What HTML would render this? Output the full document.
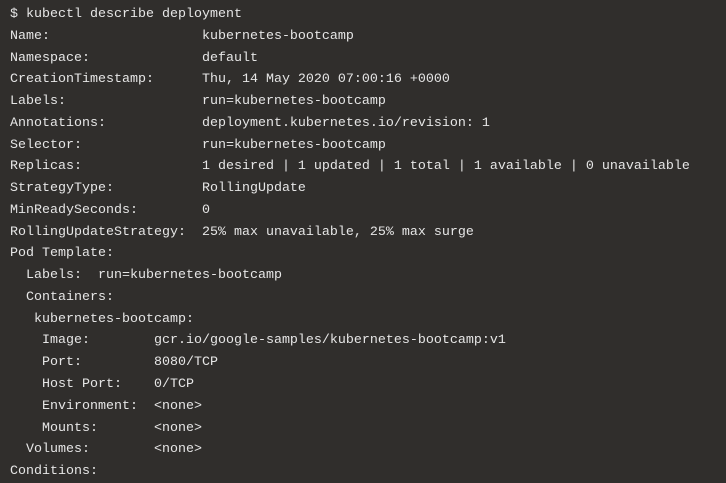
<!DOCTYPE html>
<html><head><style>
html,body{margin:0;padding:0;background:#302e2c;width:726px;height:483px;overflow:hidden}
pre{margin:0;position:absolute;left:10px;top:4px;font-family:"Liberation Mono",monospace;font-size:13.33px;line-height:21.76px;color:#e6e6e6}
</style></head><body>
<pre>$ kubectl describe deployment
Name:                   kubernetes-bootcamp
Namespace:              default
CreationTimestamp:      Thu, 14 May 2020 07:00:16 +0000
Labels:                 run=kubernetes-bootcamp
Annotations:            deployment.kubernetes.io/revision: 1
Selector:               run=kubernetes-bootcamp
Replicas:               1 desired | 1 updated | 1 total | 1 available | 0 unavailable
StrategyType:           RollingUpdate
MinReadySeconds:        0
RollingUpdateStrategy:  25% max unavailable, 25% max surge
Pod Template:
  Labels:  run=kubernetes-bootcamp
  Containers:
   kubernetes-bootcamp:
    Image:        gcr.io/google-samples/kubernetes-bootcamp:v1
    Port:         8080/TCP
    Host Port:    0/TCP
    Environment:  &lt;none&gt;
    Mounts:       &lt;none&gt;
  Volumes:        &lt;none&gt;
Conditions:</pre>
</body></html>
